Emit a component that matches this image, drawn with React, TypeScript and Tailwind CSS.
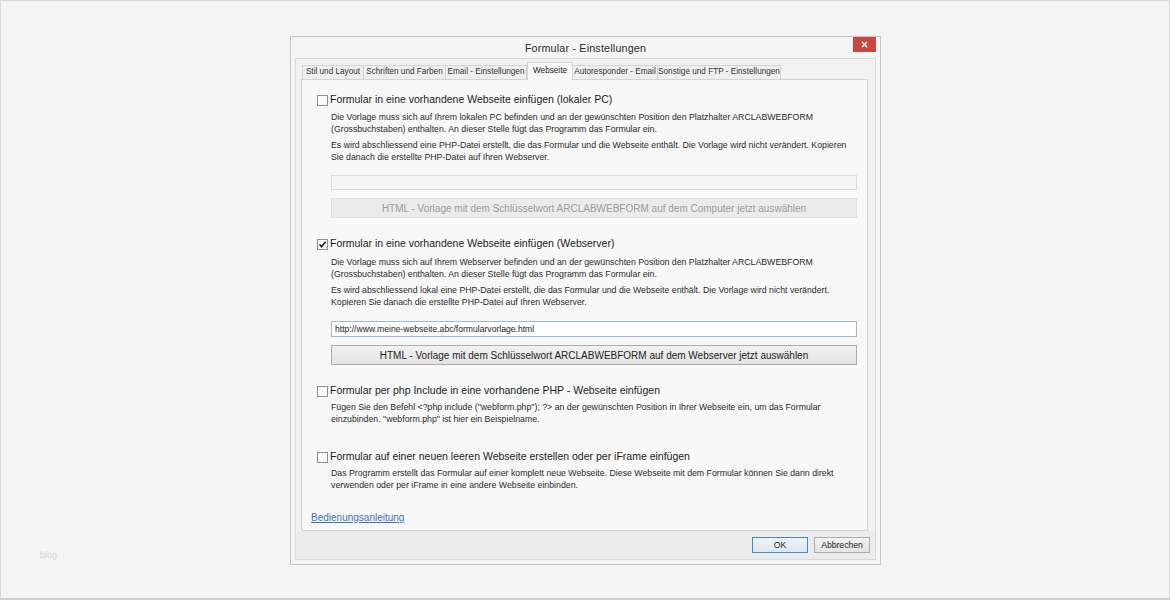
import React from 'react';

const TABS = [
  { label: 'Stil und Layout', w: 'w-[62px]' },
  { label: 'Schriften und Farben', w: 'w-[83px]' },
  { label: 'Email - Einstellungen', w: 'w-[82px]' },
  { label: 'Webseite', w: 'w-[46px]', active: true },
  { label: 'Autoresponder - Email', w: 'w-[86px]' },
  { label: 'Sonstige und FTP - Einstellungen', w: 'w-[124px]' },
];

function Checkbox({ checked }: { checked?: boolean }) {
  return (
    <span className="w-[11px] h-[11px] border border-[#8e8e8e] bg-[#fbfbfb] flex items-center justify-center shrink-0">
      {checked && (
        <svg width="9" height="9" viewBox="0 0 9 9">
          <path d="M1.5 4.5 L3.6 6.8 L7.6 1.8" fill="none" stroke="#1a1a1a" strokeWidth="1.6" />
        </svg>
      )}
    </span>
  );
}

function OptionRow({ label, checked, className }: { label: string; checked?: boolean; className?: string }) {
  return (
    <div className={`flex items-center gap-[2px] h-[14px] ml-[15px] ${className ?? ''}`}>
      <Checkbox checked={checked} />
      <span className="text-[10.5px] text-[#1c1c1c] whitespace-nowrap">{label}</span>
    </div>
  );
}

function Para({ lines, className }: { lines: string[]; className?: string }) {
  return (
    <div className={`ml-[29px] text-[8.75px] leading-[11.5px] text-[#2a2a2a] ${className ?? ''}`}>
      {lines.map((l, i) => (
        <div key={i} className="whitespace-nowrap">{l}</div>
      ))}
    </div>
  );
}

export default function App() {
  return (
    <div
      className="w-[1170px] h-[600px] bg-[#f4f4f4] border border-[#d8d8d8] border-b-2 border-b-[#cfcfcf] pt-[35px] pl-[289px] relative overflow-hidden"
      style={{ fontFamily: '"Liberation Sans", Arial, sans-serif' }}
    >
      {/* faint watermark */}
      <span className="absolute left-[39px] top-[548px] text-[9px] text-[#d2d2d2]">blog</span>

      {/* Dialog */}
      <div className="w-[591px] h-[529px] border border-[#c6c6c6] bg-[#f5f5f5] flex flex-col px-[4px] pb-[4px]">
        {/* Title bar */}
        <div className="h-[21px] relative flex items-center justify-center shrink-0">
          <span className="text-[10.7px] text-[#2a2a2a] tracking-[0.2px] mt-[1px]">Formular - Einstellungen</span>
          <div className="absolute right-[0px] top-[0px] w-[23px] h-[15px] bg-[#c9473e] flex items-center justify-center">
            <svg width="7" height="7" viewBox="0 0 7 7">
              <path d="M1 1 L6 6 M6 1 L1 6" stroke="#ffffff" strokeWidth="1.4" />
            </svg>
          </div>
        </div>

        {/* Client area */}
        <div className="flex-1 border border-[#d9d9d9] bg-[#f2f2f2] flex flex-col pl-[5px] pr-[7px]">
          {/* Tabs */}
          <div className="flex items-end h-[20px] pl-[1px] shrink-0">
            {TABS.map(t => (
              <div
                key={t.label}
                className={
                  t.active
                    ? `${t.w} h-[18px] -mb-px relative z-10 bg-[#f8f8f8] border border-[#d3d3d3] border-b-0 flex items-center justify-center text-[8.2px] text-[#222] whitespace-nowrap`
                    : `${t.w} h-[14px] bg-[#efefef] border border-[#d3d3d3] border-b-0 -ml-px first:ml-0 flex items-center justify-center text-[8.2px] text-[#333] whitespace-nowrap`
                }
              >
                {t.label}
              </div>
            ))}
          </div>

          {/* Tab panel */}
          <div className="h-[452px] border border-[#d3d3d3] bg-[#f8f8f8] flex flex-col pt-[13px] shrink-0">
            <OptionRow label="Formular in eine vorhandene Webseite einfügen (lokaler PC)" />
            <Para
              className="mt-[5px]"
              lines={[
                'Die Vorlage muss sich auf Ihrem lokalen PC befinden und an der gewünschten Position den Platzhalter ARCLABWEBFORM',
                '(Grossbuchstaben) enthalten. An dieser Stelle fügt das Programm das Formular ein.',
              ]}
            />
            <Para
              className="mt-[5px]"
              lines={[
                'Es wird abschliessend eine PHP-Datei erstellt, die das Formular und die Webseite enthält. Die Vorlage wird nicht verändert. Kopieren',
                'Sie danach die erstellte PHP-Datei auf Ihren Webserver.',
              ]}
            />
            <div className="ml-[29px] mt-[12px] w-[526px] h-[15px] border border-[#dcdcdc] bg-[#f3f3f3]" />
            <div className="ml-[29px] mt-[8px] w-[526px] h-[20px] border border-[#e0e0e0] bg-[#ebebeb] flex items-center justify-center text-[10px] text-[#9c9c9c] whitespace-nowrap">
              HTML - Vorlage mit dem Schlüsselwort ARCLABWEBFORM auf dem Computer jetzt auswählen
            </div>

            <OptionRow className="mt-[19px]" checked label="Formular in eine vorhandene Webseite einfügen (Webserver)" />
            <Para
              className="mt-[6px]"
              lines={[
                'Die Vorlage muss sich auf Ihrem Webserver befinden und an der gewünschten Position den Platzhalter ARCLABWEBFORM',
                '(Grossbuchstaben) enthalten. An dieser Stelle fügt das Programm das Formular ein.',
              ]}
            />
            <Para
              className="mt-[5px]"
              lines={[
                'Es wird abschliessend lokal eine PHP-Datei erstellt, die das Formular und die Webseite enthält. Die Vorlage wird nicht verändert.',
                'Kopieren Sie danach die erstellte PHP-Datei auf Ihren Webserver.',
              ]}
            />
            <div className="ml-[29px] mt-[13px] w-[526px] h-[16px] border border-[#9fb8d3] bg-white flex items-center px-[3px] text-[8.6px] text-[#222] whitespace-nowrap">
              http://www.meine-webseite.abc/formularvorlage.html
            </div>
            <div className="ml-[29px] mt-[8px] w-[526px] h-[20px] border border-[#acacac] bg-gradient-to-b from-[#f2f2f2] to-[#e3e3e3] flex items-center justify-center text-[10px] text-[#1e1e1e] whitespace-nowrap">
              HTML - Vorlage mit dem Schlüsselwort ARCLABWEBFORM auf dem Webserver jetzt auswählen
            </div>

            <OptionRow className="mt-[19px]" label="Formular per php Include in eine vorhandene PHP - Webseite einfügen" />
            <Para
              className="mt-[4px]"
              lines={[
                'Fügen Sie den Befehl <?php include ("webform.php"); ?> an der gewünschten Position in Ihrer Webseite ein, um das Formular',
                'einzubinden. "webform.php" ist hier ein Beispielname.',
              ]}
            />

            <OptionRow className="mt-[25px]" label="Formular auf einer neuen leeren Webseite erstellen oder per iFrame einfügen" />
            <Para
              className="mt-[4px]"
              lines={[
                'Das Programm erstellt das Formular auf einer komplett neue Webseite. Diese Webseite mit dem Formular können Sie dann direkt',
                'verwenden oder per iFrame in eine andere Webseite einbinden.',
              ]}
            />

            <div className="mt-auto mb-[2px] ml-[9px]">
              <span className="text-[10px] text-[#3b73b9] underline">Bedienungsanleitung</span>
            </div>
          </div>

          {/* Buttons */}
          <div className="flex-1 bg-[#ececec] -mr-[7px] -ml-[5px] flex justify-end items-start pt-[6px] pr-[5px] gap-[6px]">
            <div className="w-[56px] h-[16px] border border-[#3d8ad1] bg-gradient-to-b from-[#eef3f8] to-[#dde6ef] flex items-center justify-center text-[8.6px] text-[#222]">OK</div>
            <div className="w-[56px] h-[16px] border border-[#adadad] bg-gradient-to-b from-[#f2f2f2] to-[#e4e4e4] flex items-center justify-center text-[8.6px] text-[#222]">Abbrechen</div>
          </div>
        </div>
      </div>
    </div>
  );
}
